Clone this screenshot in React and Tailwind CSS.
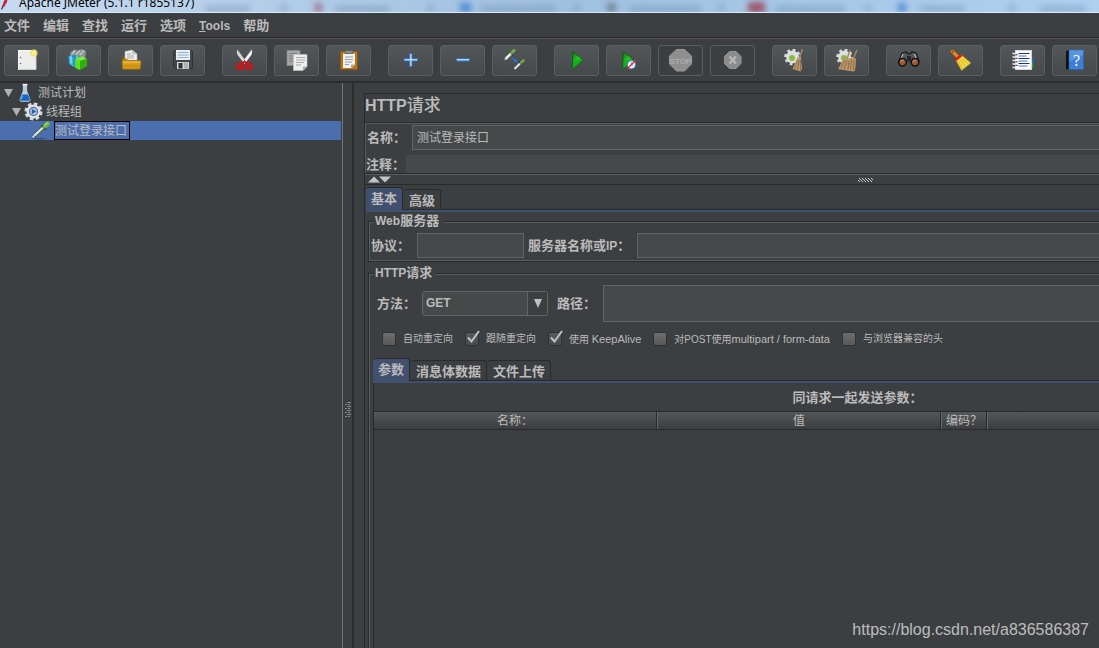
import React from 'react';

const Icon = ({ children, className = 'size-[23px]' }) => (
  <svg viewBox="0 0 23 23" className={className} aria-hidden="true">{children}</svg>
);

const NewIcon = () => (
  <Icon>
    <rect x="3.5" y="1.5" width="17" height="19" fill="#ececea" stroke="#fafafa" />
    <path d="M4 20.5h17v-15" fill="none" stroke="#c9cac8" />
    <circle cx="5.5" cy="8.5" r=".8" fill="#777" />
    <circle cx="5.5" cy="14.5" r=".8" fill="#777" />
    <circle cx="19" cy="4" r="3.600" fill="#f1e25c" opacity=".85" />
    <circle cx="19" cy="4" r="2" fill="#fffcc4" />
    <path d="M19 .5v7M15.500 4h7" stroke="#efe07a" strokeWidth=".7" />
  </Icon>
);

const TemplatesIcon = () => (
  <Icon>
    <path d="M3 4l4-3.500 4 1 4-1.500 4 2-1 8H4z" fill="#8d9394" />
    <path d="M5 5l3-3.500M9 6l4-4.500M13 6l4-4.500" stroke="#c3c8c8" strokeWidth="1.300" />
    <path d="M1.500 7l6-1 6 2v9l-5 2-6-4z" fill="#1f8fc9" />
    <path d="M1.500 7l5 1.500V18l-4-3z" fill="#35b4e8" />
    <path d="M4 6.500v8M10 7v8" stroke="#9fe0fa" strokeWidth="1.200" />
    <path d="M8 10l7-3 5 4v6l-8 4-4-2z" fill="#37a51a" />
    <path d="M8 10l5 2v9l-5-3z" fill="#5fe01f" />
    <path d="M8 10l7-3 5 3-7 2z" fill="#7be84a" />
    <path d="M13 12l7-2v7l-7 4z" fill="#2fae0d" />
  </Icon>
);

const OpenIcon = () => (
  <Icon>
    <path d="M3 9l2-2h3l1 2z" fill="#8a5c10" />
    <path d="M6 12V2.500L13 1l5 4v8z" fill="#eeeeec" stroke="#b9b9b7" strokeWidth=".6" />
    <path d="M13 1v4.500h5z" fill="#c8c9c7" />
    <path d="M8 5h4M8 7h7M8 9h7" stroke="#9a9c9a" strokeWidth=".8" />
    <path d="M3.500 10h4l1.500 1.500h12V20H4z" fill="#c98d0c" stroke="#9b6a08" strokeWidth=".7" />
    <path d="M3 12h19l-1 8H4z" fill="#dca01b" stroke="#a8750c" strokeWidth=".7" />
    <path d="M4 13h17" stroke="#f7cd63" strokeWidth=".9" />
    <path d="M4.500 17h16" stroke="#c28910" strokeWidth="3" opacity=".6" />
  </Icon>
);

const SaveIcon = () => (
  <Icon>
    <path d="M3.500 1.500h17l1 1v17H4.500l-2-2v-15z" fill="#44464a" stroke="#2a2b2d" strokeWidth=".8" />
    <rect x="5" y="1" width="14" height="10" fill="#e9eef3" />
    <path d="M6.500 3.500h11M6.500 6h11M6.500 8.500h11" stroke="#8fb0cf" strokeWidth="1" />
    <rect x="6" y="13" width="12" height="7" fill="#d2d3d1" />
    <rect x="7.500" y="14" width="4" height="5.500" fill="#303234" />
    <rect x="13" y="13.500" width="4" height="6" fill="#aeb0ae" />
  </Icon>
);

const CutIcon = () => (
  <Icon>
    <path d="M4.300.5C3.500 3 4 5 5 6.500L11.500 15l2-2z" fill="#d6d9d8" />
    <path d="M18.700.5C19.500 3 19 5 18 6.500L11.500 15l-2-2z" fill="#f2f3f2" />
    <ellipse cx="7" cy="17.400" rx="2.900" ry="2.500" fill="none" stroke="#d80f14" strokeWidth="2.200" />
    <ellipse cx="16" cy="17.400" rx="2.900" ry="2.500" fill="none" stroke="#d80f14" strokeWidth="2.200" />
    <path d="M8.500 15.500l3-3 3 3" fill="none" stroke="#d80f14" strokeWidth="2" />
  </Icon>
);

const CopyIcon = () => (
  <Icon>
    <path d="M2 1.500h13v15H2z" fill="#a3a6a6" stroke="#8b8e8e" strokeWidth=".6" />
    <path d="M4 4.500h8M4 7h6M4 9.500h4M4 12h4" stroke="#7b7f80" />
    <path d="M8.500 5.500h13.500v12l-4 4H8.500z" fill="#eeeeec" stroke="#bfc0be" strokeWidth=".7" />
    <path d="M11 8.500h9M11 11h9M11 13.500h8M11 16h5" stroke="#a6a8a6" />
    <path d="M22 17.500h-4v4z" fill="#a9aba9" />
  </Icon>
);

const PasteIcon = () => (
  <Icon>
    <rect x="3.500" y="2.500" width="17" height="18" rx="1" fill="#b97416" stroke="#8c5710" />
    <path d="M6 4.500h12v11l-3.500 3.500H6z" fill="#f1f1ef" />
    <path d="M8 1.500h8v3H8z" fill="#8b8e8c" stroke="#55585a" strokeWidth=".7" />
    <path d="M8 8h8M8 10.500h8M8 13h7M8 15.500h4" stroke="#9d9f9d" />
    <path d="M18 15.500h-4v3.500z" fill="#a7a9a7" />
  </Icon>
);

const PlusIcon = () => (
  <Icon>
    <path d="M10.500 4.500h2.500v5h5.500v2.500h-5.500v5.500h-2.500v-5.500h-5.500v-2.500h5.500z" fill="#b5d5f5" stroke="#3470bb" />
  </Icon>
);

const MinusIcon = () => (
  <Icon>
    <rect x="5.500" y="9.500" width="13" height="2.500" fill="#b5d5f5" stroke="#3470bb" />
  </Icon>
);

const ToggleIcon = () => (
  <Icon>
    <path d="M2.500 10L8 4.500" stroke="#e8ebe7" strokeWidth="2.600" />
    <path d="M1.500 11l1.500-1.500" stroke="#cfd2ce" />
    <path d="M7 3l3 3" stroke="#333" strokeWidth="1.200" />
    <path d="M8.500 4L11 1.500" stroke="#6faa4c" strokeWidth="3" strokeLinecap="round" />
    <path d="M11.500 20L17 14.500" stroke="#dfe2de" strokeWidth="2.200" />
    <path d="M16 12.500l2.500 2.500" stroke="#333" strokeWidth="1.200" />
    <path d="M18 13.500L20.500 11.500" stroke="#6faa4c" strokeWidth="2.600" strokeLinecap="round" />
    <path d="M8.500 8.500l4 3.500" stroke="#2c6fd2" strokeWidth="1.400" />
    <path d="M14.500 13.800l-4.300-1 3.200-3.200z" fill="#2c6fd2" />
  </Icon>
);

const PlayShape = () => (
  <>
    <defs>
      <linearGradient id="play" x1="0" x2="1" y1="0" y2="1">
        <stop offset="0" stopColor="#0c6d10" />
        <stop offset=".45" stopColor="#27c52c" />
        <stop offset="1" stopColor="#035e06" />
      </linearGradient>
    </defs>
    <path d="M7.500 2.500v17.500L18.500 11z" fill="url(#play)" stroke="#0a5c0c" strokeWidth=".8" />
    <path d="M8 11.500h10L8 19.500z" fill="#0da813" opacity=".7" />
  </>
);

const PlayIcon = () => <Icon><PlayShape /></Icon>;

const PlayNoTimersIcon = () => (
  <Icon>
    <g transform="translate(-1.500 0)"><PlayShape /></g>
    <circle cx="14.500" cy="15.700" r="4.200" fill="#e9eff8" stroke="#3a73bd" strokeWidth="1" />
    <path d="M14.500 13v3h2" fill="none" stroke="#6b94c9" strokeWidth=".8" />
    <path d="M10 20l9-9" stroke="#e0282c" strokeWidth="1.300" />
  </Icon>
);

const StopIcon = () => (
  <Icon>
    <path d="M7.500.5h8L22.500 7v8L15.500 22h-8L.5 15V7z" fill="#8f8f8f" stroke="#989898" />
    <text x="11.500" y="14.500" textAnchor="middle" fill="#b8b8b8" className="font-['Liberation_Sans_Narrow','Liberation_Sans',sans-serif] text-[8px] font-normal">STOP</text>
  </Icon>
);

const ShutdownIcon = () => (
  <Icon>
    <path d="M8.500 2.500h6.500l5 5V14.500l-5 5H8.500l-5-5V7.500z" fill="#8b8b8b" stroke="#969696" />
    <path d="M8.500 7.500l6.500 7M15 7.500l-6.500 7" stroke="#b9b9b9" strokeWidth="2.400" />
  </Icon>
);

const GearShape = () => (
  <>
    <circle cx="9.500" cy="8" r="6.900" fill="none" stroke="#d9dad9" strokeWidth="2.800" strokeDasharray="2.700 2.700" />
    <circle cx="9.500" cy="8" r="6.400" fill="#dedfde" />
    <circle cx="9" cy="9" r="3" fill="#7cc322" stroke="#b5b7b3" strokeWidth=".8" />
  </>
);

const ClearIcon = () => (
  <Icon>
    <GearShape />
    <path d="M19.500 0L16 10" stroke="#a58763" strokeWidth="1.500" />
    <path d="M14.500 8.500l3.500 1 1 10-1.500 3-8-2.500z" fill="#b8946b" />
    <path d="M14.500 11l-3 9M16 11l-1.500 10M17.500 11v10" stroke="#8a6a45" strokeWidth=".8" />
  </Icon>
);

const ClearAllIcon = () => (
  <Icon>
    <GearShape />
    <path d="M15 1l-3 9M22 1l-4 9" stroke="#a58763" strokeWidth="1.500" />
    <path d="M9 8.500l4 1 5-1 3 1-.5 9-1 4-8-1-8.500-1.500z" fill="#b8946b" />
    <path d="M10 11l-4 8M12 12l-3 8M14 12l-1 8M16.500 11l-1 10M19 11l-.5 10" stroke="#84633e" strokeWidth=".8" />
  </Icon>
);

const SearchIcon = () => (
  <Icon>
    <path d="M5 4l4-1 2 2h2l2-2 4 1 3 8H2z" fill="#55575a" stroke="#17181a" strokeWidth="1.200" />
    <path d="M6 5l-2.500 6M17.500 5l2.500 6" stroke="#b9bbbd" strokeWidth="1.200" />
    <path d="M10 7h4v4h-4z" fill="#26282a" />
    <circle cx="5.500" cy="13.300" r="3.800" fill="#9a5a34" stroke="#111" strokeWidth="1.500" />
    <circle cx="18" cy="13.300" r="3.800" fill="#9a5a34" stroke="#111" strokeWidth="1.500" />
    <path d="M3.800 13a2 2 0 0 1 3-1.500M16.300 13a2 2 0 0 1 3-1.500" fill="none" stroke="#d9996b" strokeWidth="1" />
  </Icon>
);

const ResetIcon = () => (
  <Icon>
    <path d="M3.500 2.500L9 8" stroke="#8c4d12" strokeWidth="4.600" strokeLinecap="round" />
    <path d="M3.500 2.500L9 8" stroke="#d99035" strokeWidth="3" strokeLinecap="round" />
    <circle cx="3.800" cy="2.800" r=".9" fill="#704010" />
    <path d="M7 11.500l6-5 9 7.500-9.500 7.500z" fill="#f0d743" stroke="#b38f12" strokeWidth=".8" />
    <path d="M9.500 12.500l4 7M11.500 11l5 7M13.500 10l6 6" stroke="#d4b128" strokeWidth=".8" />
    <path d="M6.500 11L12.500 6" stroke="#d8201c" strokeWidth="2.600" />
  </Icon>
);

const FunctionIcon = () => (
  <Icon>
    <path d="M20 9h2.300v5H20z" fill="#1e6fd6" />
    <path d="M20 14h2.300v5H20z" fill="#1da321" />
    <rect x="4.500" y="1.500" width="16" height="19" fill="#fbfbfb" stroke="#d6d6d6" />
    <path d="M7.500 4.500h11M7.500 9.500h11M7.500 14.500h11" stroke="#23385c" strokeWidth="1.200" />
    <path d="M7.500 7h8M7.500 12h9M7.500 17h9" stroke="#3c7bd0" strokeWidth="1.200" />
    <path d="M1.500 4.500h4M1.500 8h4M1.500 11.500h4M1.500 15h4M1.500 18.500h4" stroke="#eee" strokeWidth="1.600" />
    <path d="M4.500 5.800h2M4.500 9.300h2M4.500 12.800h2M4.500 16.300h2" stroke="#222" />
  </Icon>
);

const HelpIcon = () => (
  <Icon>
    <path d="M3 2l3-1v19.500l-3-.5z" fill="#0e1114" />
    <rect x="6" y="1" width="14.500" height="19.500" fill="#3f7fd3" stroke="#2f62a8" strokeWidth=".7" />
    <path d="M6.500 1.300h13.700v5l-13.700 6z" fill="#6ba2e6" opacity=".6" />
    <text x="13.500" y="16.500" textAnchor="middle" fill="#fff" className="font-['Liberation_Serif',serif] text-[16px] font-normal">?</text>
  </Icon>
);

const TOOL_GROUPS = [
  [['新建', NewIcon], ['模板', TemplatesIcon], ['打开', OpenIcon], ['保存', SaveIcon]],
  [['剪切', CutIcon], ['复制', CopyIcon], ['粘贴', PasteIcon]],
  [['展开', PlusIcon], ['折叠', MinusIcon], ['切换', ToggleIcon]],
  [['启动', PlayIcon], ['不停顿启动', PlayNoTimersIcon], ['停止', StopIcon, true], ['关闭', ShutdownIcon, true]],
  [['清除', ClearIcon], ['清除全部', ClearAllIcon]],
  [['搜索', SearchIcon], ['重置搜索', ResetIcon]],
  [['函数助手', FunctionIcon], ['帮助', HelpIcon]],
];

const FlaskIcon = () => (
  <svg viewBox="0 0 16 19" className="h-[19px] w-4" aria-hidden="true">
    <path d="M6.300 2h3.400v6l3.500 9-1 1.300H3.800l-1-1.300 3.500-9z" fill="#b9cde2" stroke="#dfe8f1" strokeWidth=".7" />
    <path d="M5 11.500h6l2 5-.8 1.300H3.800L3 16.500z" fill="#1569c4" />
    <path d="M5.500 12.500l-1.200 3.500" stroke="#6fb2f0" strokeWidth="1.200" />
    <path d="M5.600 1.500h4.800" stroke="#f3f6f9" strokeWidth="1.300" />
  </svg>
);

const GearIcon = () => (
  <svg viewBox="0 0 19 19" className="size-[19px]" aria-hidden="true">
    <circle cx="9.500" cy="9.500" r="7.500" fill="none" stroke="#d3d7dc" strokeWidth="3.200" strokeDasharray="3.600 2.290" />
    <circle cx="9.500" cy="9.500" r="7" fill="#e2e5e9" />
    <circle cx="9.500" cy="9.500" r="4.100" fill="#a9c4e6" stroke="#5d7290" strokeWidth="1.300" />
    <path d="M7.800 6.800l4.500 2.700-4.500 2.700z" fill="#2862ad" />
  </svg>
);

const PipetteIcon = () => (
  <svg viewBox="0 0 20 19" className="h-[19px] w-5" aria-hidden="true">
    <ellipse cx="8" cy="17.600" rx="7" ry=".9" fill="#35507f" />
    <path d="M4 14L12 6.500" stroke="#4f5c50" strokeWidth="3.800" strokeLinecap="round" />
    <path d="M4 14L12 6.500" stroke="#e2e8de" strokeWidth="2.200" strokeLinecap="round" />
    <path d="M1.500 16.500l2-2" stroke="#dde0da" strokeWidth="1.400" />
    <path d="M10.500 4l4.500 4.500" stroke="#2c4a22" strokeWidth="1.800" />
    <path d="M13.800 5.200l3-2.500" stroke="#6fb53f" strokeWidth="4.400" strokeLinecap="round" />
    <path d="M14 4l2.500-2" stroke="#a8dd80" strokeWidth="1.200" strokeLinecap="round" />
  </svg>
);

const Arrow = () => (
  <button type="button" aria-label="折叠" className="block">
    <svg viewBox="0 0 9 8" className="h-2 w-[9px]" aria-hidden="true"><path d="M0 0h9L4.500 8z" fill="#b0b0b0" /></svg>
  </button>
);

const MENUS = ['文件', '编辑', '查找', '运行', '选项', 'Tools', '帮助'];

const En = ({ children }) => <span className="font-['Liberation_Sans','Noto_Sans_CJK_SC',sans-serif] text-[12px]">{children}</span>;

function Tabs({ items, label, className }) {
  return (
    <div className={className}>
      <div role="tablist" aria-label={label} className="flex items-end gap-px border-b border-[#282a2b]">
        {items.map((t, i) =>
          i === 0 ? (
            <button key={t} role="tab" aria-selected="true" className="-mb-px h-[23px] rounded-t-[3px] border-r border-t border-[#282a2b] bg-[#42506f] px-[5px] pb-1 text-[13px] leading-none">{t}</button>
          ) : (
            <button key={t} role="tab" aria-selected="false" className="h-5 rounded-t-[3px] border-r border-t border-[#282a2b] px-[5px] pb-px text-[13px] leading-none">{t}</button>
          )
        )}
      </div>
      <div className="h-[2px] bg-[#42506f]" />
    </div>
  );
}

function Check({ label, checked, id }) {
  return (
    <span className="flex items-center gap-[7px]">
      <span className="relative size-[14px]">
        <input id={id} type="checkbox" defaultChecked={checked} className="peer block size-[14px] appearance-none rounded-[2px] border border-[#2f3233] bg-linear-to-b from-[#6d6d6d] to-[#595959] checked:from-[#55585a] checked:to-[#484b4d]" />
        <svg viewBox="0 0 15 15" className="pointer-events-none absolute -top-[2px] left-px hidden size-[15px] peer-checked:block" aria-hidden="true">
          <path d="M2 7.500l3.500 4L13 1" fill="none" stroke="#c4c4c4" strokeWidth="2" />
        </svg>
      </span>
      <label htmlFor={id} className="font-['Liberation_Sans','Noto_Sans_CJK_SC',sans-serif] whitespace-nowrap font-normal leading-none">{label}</label>
    </span>
  );
}

const CHECKS = [
  ['自动重定向', false],
  ['跟随重定向', true],
  [<>使用 <span className="text-[11px]">KeepAlive</span></>, true],
  [<>对POST使用<span className="text-[11px]">multipart / form-data</span></>, false],
  ['与浏览器兼容的头', false],
];

const field = 'border border-[#646464] bg-[#45494a] outline-none';
const group = 'border border-[#282a2b] shadow-[inset_1px_1px_0_#5a5d5e,inset_0_-1px_0_#5a5d5e]';
const legend = 'relative ml-[5px] h-4 bg-[#3c3f41] pl-px pr-1 leading-[14px]';

export default function App() {
  return (
    <div className="relative flex h-screen flex-col overflow-hidden bg-[#3c3f41] font-['Noto_Sans_CJK_SC',sans-serif] text-[13px] font-bold text-[#bbbbbb]">
      <header className="relative h-[13px] shrink-0 overflow-hidden border-b border-[#dcebf8] bg-linear-to-r from-[#c5daf0] via-[#a0c0e0] to-[#b0d0f0]">
        <svg className="absolute inset-0 h-3 w-full" aria-hidden="true">
          <defs><filter id="soft" x="-50%" y="-100%" width="200%" height="300%"><feGaussianBlur stdDeviation="3" /></filter></defs>
          <g filter="url(#soft)">
            <g fill="#6f8fb0" opacity=".5">
              <path d="M205 6h45v6h-45zM280 5h8v6h-8zM335 6h55v6h-55zM427 5h7v6h-7zM480 6h75v6h-75zM573 5h7v6h-7zM630 6h72v6h-72zM718 5h7v6h-7zM775 6h70v6h-70zM864 5h7v6h-7zM920 6h45v6h-45zM1008 5h8v6h-8zM1040 6h46v6h-46z" />
            </g>
            <g opacity=".75">
              <path d="M607 3h9v9h-9z" fill="#5f6c7a" />
              <path d="M315 3h7v9h-7z" fill="#a04a6c" />
              <path d="M460 3h11v9h-11z" fill="#2f76cc" />
              <path d="M748 2h17v11h-17z" fill="#9a2c44" />
              <path d="M898 3h8v9h-8z" fill="#2f76cc" />
            </g>
          </g>
        </svg>
        <div className="relative -mt-[5px] flex h-4 items-center gap-[11px]">
          <svg viewBox="0 0 8 16" className="h-4 w-2" aria-hidden="true">
            <path d="M4 6c2-3 4-2 3 1l-3 5-2 0z" fill="#c4203f" /><path d="M3 11l-1.500 3.500" stroke="#5b1c50" strokeWidth="1.200" />
          </svg>
          <h1 className="font-['Noto_Sans',sans-serif] whitespace-nowrap text-[12px] font-normal leading-4 text-black">Apache JMeter (5.1.1 r1855137)</h1>
        </div>
      </header>

      <nav className="flex h-[25px] shrink-0 items-center gap-[13px] border-b border-[#282828] px-1">
        {MENUS.map((m) => (
          <button key={m} type="button" className="leading-4">
            {m === 'Tools' ? <En><span className="underline">T</span>ools</En> : m}
          </button>
        ))}
      </nav>

      <div role="toolbar" className="flex h-[43px] shrink-0 items-center gap-[17px] overflow-hidden border-t border-[#55504d] pl-1">
        {TOOL_GROUPS.map((g, i) => (
          <div key={i} className="flex gap-[7px]">
            {g.map(([name, Glyph, off]) => (
              <button
                key={name}
                type="button"
                aria-label={name}
                disabled={off}
                className="flex h-[31px] w-[45px] items-center justify-center rounded-[3px] border border-[#5b5e60] bg-linear-to-b from-[#52575a] to-[#45494b] disabled:bg-none"
              >
                <Glyph />
              </button>
            ))}
          </div>
        ))}
      </div>

      <div className="flex min-h-0 flex-1 border-t-2 border-[#2b2d2e]">
        <aside className="w-[343px] shrink-0 border-r border-[#73777a]">
          <ul className="font-normal text-[12px] leading-none">
            <li className="flex h-[19px] items-center gap-1 pl-1"><Arrow /><FlaskIcon /><span className="pb-[2px] pl-px">测试计划</span></li>
            <li className="flex h-[19px] items-center gap-[3px] pl-3"><Arrow /><GearIcon /><span className="pb-[2px]">线程组</span></li>
            <li className="mr-px flex h-[19px] items-center gap-[3px] bg-[#4b6eaf] pl-[31px]">
              <PipetteIcon /><span className="flex h-[19px] items-center border border-black pb-[2px] pr-[2px]">测试登录接口</span>
            </li>
          </ul>
        </aside>

        <div role="separator" aria-orientation="vertical" className="flex w-[11px] shrink-0 items-center border-r-2 border-[#2b2d2e]">
          <svg viewBox="0 0 6 16" className="ml-[2px] mt-[88px] h-4 w-[6px]" aria-hidden="true">
            <path d="M2.500.5h1M4.500.5h1M.5 2.500h1M3.500 2.500h1M2.500 4.500h1M4.500 4.500h1M.5 6.500h1M3.500 6.500h1M2.500 8.500h1M4.500 8.500h1M.5 10.500h1M3.500 10.500h1M2.500 12.500h1M4.500 12.500h1M.5 14.500h1M3.500 14.500h1" stroke="#d5d5d5" />
          </svg>
        </div>

        <main className="min-w-0 flex-1 overflow-hidden pl-[10px] pt-[10px]">
          <div className="flex h-full min-w-[1002px] flex-col border-l border-t border-[#282a2b]">
            <h2 className="h-7 shrink-0 text-[17px] font-medium leading-[20px]">
              <span className="font-['Liberation_Sans',sans-serif] text-[16px] font-bold">HTTP</span>请求
            </h2>
            <div className="shrink-0 border-y border-[#282a2b]">
              <div className="border-l border-t border-[#5a5d5e] pt-px">
                <div className="flex items-center">
                  <label htmlFor="name" className="w-[46px] shrink-0 pb-[2px] pl-px leading-none">名称：</label>
                  <input id="name" defaultValue="测试登录接口" className={`${field} h-[25px] min-w-0 flex-1 px-1 pb-[2px] text-[12px] font-normal`} />
                </div>
                <div className="mt-[5px] flex items-center">
                  <label htmlFor="comment" className="w-10 shrink-0 pb-[2px] leading-none">注释：</label>
                  <input id="comment" className="h-[18px] min-w-0 flex-1 bg-[#45494a] outline-none" />
                </div>
              </div>
            </div>
            <div role="separator" className="flex h-[10px] shrink-0 items-center border-t border-[#5a5d5e] pl-[3px] pr-7">
              <svg viewBox="0 0 24 7" className="h-[7px] w-6" aria-hidden="true"><path d="M0 6.500L6 .5l6 6zM11 .5h12l-6 6z" fill="#c4c4c4" /></svg>
              <svg viewBox="0 0 15 4" className="mx-auto h-1 w-[15px]" aria-hidden="true">
                <path d="M1 .5h1M4 .5h1M7 .5h1M10 .5h1M13 .5h1M2 1.500h1M5 1.500h1M8 1.500h1M11 1.500h1M14 1.500h1M0 2.500h1M3 2.500h1M6 2.500h1M9 2.500h1M12 2.500h1M1 3.500h1M4 3.500h1M7 3.500h1M10 3.500h1M13 3.500h1" stroke="#d0d0d0" />
              </svg>
            </div>

            <div className="flex min-h-0 flex-1 flex-col border-t border-[#282a2b] pl-px pt-[2px]">
              <Tabs label="请求" items={['基本', '高级']} className="shrink-0" />
              <fieldset className={`${group} ml-[2px] mt-px shrink-0 pb-[3px]`}>
                <legend className={legend}><En>Web</En>服务器</legend>
                <div className="flex items-center pl-[2px] pt-1">
                  <label htmlFor="protocol" className="w-[46px] shrink-0 pb-[2px] leading-none">协议：</label>
                  <input id="protocol" className={`${field} h-[25px] w-[107px]`} />
                  <label htmlFor="server" className="ml-1 w-[109px] shrink-0 pb-[2px] leading-none">服务器名称或<En>IP</En>：</label>
                  <input id="server" className={`${field} h-[25px] min-w-0 flex-1`} />
                </div>
              </fieldset>

              <fieldset className={`${group} -mb-2 ml-[2px] mt-[3px] flex min-h-0 flex-1 flex-col`}>
                <legend className={legend}><En>HTTP</En>请求</legend>
                <div className="flex items-center pl-2 pt-1">
                  <label htmlFor="method" className="w-[45px] shrink-0 pb-[2px] leading-none">方法：</label>
                  <div className="relative w-[126px] shrink-0">
                    <select id="method" className="font-['Liberation_Sans',sans-serif] block h-[25px] w-full appearance-none rounded-[3px] border border-[#646464] bg-[#45494a] px-[3px] pb-[2px] text-[12px] font-bold leading-none outline-none">
                      <option>GET</option>
                      <option>POST</option>
                    </select>
                    <span className="pointer-events-none absolute inset-y-px right-px flex w-5 items-center justify-center border-l border-[#646464] bg-[#3c3f41]">
                      <svg viewBox="0 0 8 9" className="h-[9px] w-2" aria-hidden="true"><path d="M0 0h8L4 9z" fill="#c0c0c0" /></svg>
                    </span>
                  </div>
                  <label htmlFor="path" className="ml-[9px] w-[46px] shrink-0 pb-[2px] leading-none">路径：</label>
                  <input id="path" className={`${field} h-[37px] min-w-0 flex-1`} />
                </div>
                <div className="mt-[7px] flex h-5 items-center gap-3 pl-[13px] text-[10px]">
                  {CHECKS.map(([label, on], i) => <Check key={i} id={`opt-${i}`} label={label} checked={on} />)}
                </div>
                <Tabs label="参数" items={['参数', '消息体数据', '文件上传']} className="mt-[9px] pl-1" />
                <div className="ml-1 flex min-h-0 flex-1 flex-col border-l border-[#282a2b]">
                  <p className="h-7 pr-6 text-center leading-7">同请求一起发送参数：</p>
                  <div className="border-y border-[#282a2b] bg-linear-to-b from-[#54585b] to-[#3b3d3f]">
                    <table className="w-full table-fixed border-separate border-spacing-0 font-normal">
                      <colgroup><col className="w-[283px]" /><col className="w-[284px]" /><col className="w-[46px]" /><col /></colgroup>
                      <thead>
                        <tr className="h-[17px] text-[12px] leading-none">
                          <th className="border-r border-[#282a2b] p-0 pb-px font-normal">名称：</th>
                          <th className="border-l border-r border-l-[#66696b] border-r-[#282a2b] p-0 pb-px font-normal">值</th>
                          <th className="border-l border-r border-l-[#66696b] border-r-[#282a2b] p-0 pb-px font-normal">编码？</th>
                          <th className="border-l border-l-[#66696b] p-0" aria-label="包含等于" />
                        </tr>
                      </thead>
                    </table>
                  </div>
                </div>
              </fieldset>
            </div>
          </div>
        </main>
      </div>

      <p className="pointer-events-none absolute bottom-[6px] right-[10px] font-['Liberation_Sans',sans-serif] text-[16px] font-normal leading-6 text-[#bdbdbd]">https://blog.csdn.net/a836586387</p>
    </div>
  );
}
